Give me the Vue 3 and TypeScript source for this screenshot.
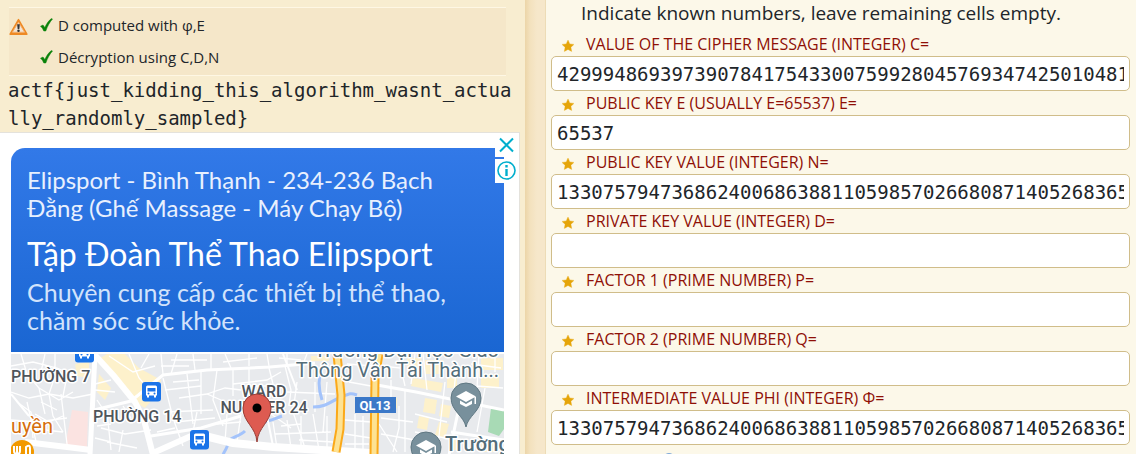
<script setup lang="ts">
import { ref } from 'vue'

interface Field {
  id: string
  label: string
  value: string
}

const bigN = '13307579473686240068638811059857026680871405268365174'

const fields = ref<Field[]>([
  { id: 'c', label: 'Value of the cipher message (Integer) C=', value: '42999486939739078417543300759928045769347425010481974' },
  { id: 'e', label: 'Public key E (usually E=65537) E=', value: '65537' },
  { id: 'n', label: 'Public key value (Integer) N=', value: bigN },
  { id: 'd', label: 'Private key value (Integer) D=', value: '' },
  { id: 'p', label: 'Factor 1 (prime number) P=', value: '' },
  { id: 'q', label: 'Factor 2 (prime number) Q=', value: '' },
  { id: 'phi', label: 'Intermediate value phi (Integer) Φ=', value: bigN },
])

const steps: string[] = ['D computed with φ,E', 'Décryption using C,D,N']

const busStops: [number, number][] = [[64, -11], [131, 28], [179, 76]]
const schools: [number, number][] = [[455, 44], [415, 93]]

const blocks: string[] = [
  'M86 6l10-6h18l14 14 22 12-4 14-12 14-10-6-18-20z',
  'M64 10l14-2v16l-12-2z',
  'M88 20l12 14-6 12-8-8z',
  'M396 4h14v16h-14zM414 6h18v14h-18zM402 24l30 5-2 9-30-6zM436 18h10v16h-10zM470 4h22v12h-22zM470 20h18v14h-18z',
  'M414 44l12 2-2 14-12-2zM408 62l10 2-2 12-10-2zM430 50l10 2-2 12-10-2zM428 68l10 2-4 14-10-3zM438 86h10v10h-10zM470 84l14 2v12h-14z',
  'M300 2h18v5h-18zM374 44h12v10h-12z',
]

const lanes: string[] = [
  'M0 12l22-4 24 6 18 8M10 0l6 20 12 14 6 26M34 0l-4 18M0 38l18 6 20-4 24 4 20-4M6 48l14 10 2 26M44 0v22l-6 18 4 22 10 16',
  'M16 48l10 44M50 40l6 50M0 66l26 2 30-4M28 34l20 12 14-8M56 22l-4 20M24 60l14 8 14-6M34 76l18 2M30 48l16 8',
  'M94 58l-8-12M84 36l20 2M84 30l16-4M90 74l24 6 26-4M96 88l30 6M96 58l4 38M112 76l-4 22M84 84l16 4M100 70l-14 2M112 52l8 12',
  'M98 2l24 16 22-6M118 0l10 24 12 14M138 0l-8 14M150 0l2 20M166 0l-6 20M182 0l2 16M200 0v16M214 0l6 14M238 0v12M256 0l2 12M276 0v10M296 0l-4 10',
  'M150 12h28M160 6h36M212 8l34-4M268 4l22 2M152 24l10 40 10 28M162 28l26-2M168 44l28-4 14 6M176 20l6 50M190 18v42M206 16l-4 30 10 26M222 16v26M238 14v18M258 14l4 16',
  'M154 36l36-4M154 58l48-2M164 68l40-4M164 74l-18 4M186 58l-4 20M196 40l18-6 16 2M222 30l34-4 14-8M206 70l24-2M230 60l-4 28M216 60l-2 28M240 32h22',
  'M274 12l6 24-2 16M286 28l-4 30 12 36M304 28v30M316 28l-4 50M276 38l48 2M262 68l4 26M276 66l4 28M290 62v34M302 60l6 36M264 80l56-2M270 72l20-2M288 86l34 2M316 62v34M260 60l20 14',
  'M336 10l26 2M338 28l22 4M336 40h8M334 66l26 2M334 80l26 4M344 60v36M352 62v34M334 90h24',
  'M370 12l20 2 4 18M380 26v24M388 52v22l-6 24M370 64l32 4M370 80l34 6M394 36v62M368 70l18 28M404 0l-4 30M412 0l4 36M434 28l-8 72M446 8l-4 38M468 0l-2 34M404 60l32 8M404 78l30 6M460 10l30 4M466 32l26 2M474 34l-8 44M484 0v18',
]
</script>

<template>
  <main class="page">
    <section class="results">
      <div class="notice">
        <svg class="warn" viewBox="0 0 20 18" role="img" aria-label="Warning">
          <path d="M10 1.200 18.800 16.600H1.200z" fill="#ee8a25" stroke="#ee8a25" stroke-width="1.600" stroke-linejoin="round" />
          <path d="M10 4 16.400 14.500H3.600z" fill="#f3e6d6" stroke="#f3b070" />
          <path d="M8.600 6.200h2.800l-.5 5H9.100z" fill="#333" />
          <circle cx="10" cy="13" r="1.300" fill="#333" />
        </svg>
        <ul class="steps">
          <li v-for="step in steps" :key="step">
            <svg class="check" viewBox="0 0 13 14" aria-hidden="true">
              <path d="M.5 8.200 3 7l1.800 2.600C6.600 5.600 8.600 2.600 11.400.6L12.500 1C9.500 4.400 7.500 8.200 5.800 13H3.800C3 11 2 9.400.5 8.200z" fill="#0a820a" stroke="#0a820a" stroke-width=".5" />
            </svg>
            <span>{{ step }}</span>
          </li>
        </ul>
      </div>
      <p class="plain">actf{just_kidding_this_algorithm_wasnt_actually_randomly_sampled}</p>

      <aside class="ad">
        <a class="card" href="#">
          <span class="place">Elipsport - Bình Thạnh - 234-236 Bạch Đằng (Ghế Massage - Máy Chạy Bộ)</span>
          <span class="name">Tập Đoàn Thể Thao Elipsport</span>
          <span class="desc">Chuyên cung cấp các thiết bị thể thao, chăm sóc sức khỏe.</span>
        </a>
        <svg class="map" viewBox="0 0 493 101" preserveAspectRatio="xMinYMin slice" role="img" aria-label="Map">
          <rect width="493" height="101" fill="#e8eaed" />
          <path v-for="b in blocks" :key="b" :d="b" fill="#fdf1cb" />
          <path d="M61 56l16 2-1 35H54z" fill="#fbe3e1" />
          <path d="M480 54l13 3v18l-5 7-11-4z" fill="#a8dab5" />
          <g fill="none" stroke="#fff" stroke-width="1.300">
            <path v-for="l in lanes" :key="l" :d="l" />
          </g>
          <g fill="none" stroke="#a3c3fb" stroke-width="3">
            <path d="M311 14c-4 10-4 20 0 32M302 53c14 0 18-6 28-10s10-4 16-2M249 68c10 0 16-4 22-6M212 101c2-6 6-8 4-12 2-6 12-6 18-12" />
          </g>
          <g fill="none" stroke="#fff">
            <path d="M84 0 79 101" stroke-width="5" />
            <path d="M83 0l20 22 21 26 9 18 9 35" stroke-width="6" />
            <path d="M0 40l18 22" stroke-width="2" />
            <path d="M14 88l42 5 24 3M142 99l38-17" stroke-width="6" />
            <path d="M186 80l36 9 40 4 97 6" stroke-width="8" />
            <path d="M83 56l37-9 32-26 44-5 63-3 45-4M140 82l50-8 40-12" stroke-width="3" />
            <path d="M366 31l39 7 88 18M452 34l-14 67M440 78l53 8" stroke-width="3" />
            <path d="M256 62l6 30M272 0l14 36" stroke-width="2" />
          </g>
          <g fill="none" stroke="#fba919" stroke-width="9">
            <path d="M326 0l4 41-1 34-4 23M368 0l-4 24-1 77" />
          </g>
          <g fill="none" stroke="#fde293" stroke-width="5">
            <path d="M326 0l4 41-1 34-4 23M368 0l-4 24-1 77" />
          </g>

          <g v-for="[x, y] in busStops" :key="x" :transform="`translate(${x} ${y})`">
            <rect width="19" height="19.500" rx="3" fill="#1a73e8" />
            <path d="M5.500 3.500h8a1.500 1.500 0 0 1 1.500 1.500v8.500h-1v2h-2v-2H7v2H5v-2H4V5a1.500 1.500 0 0 1 1.500-1.500z" fill="#fff" />
            <path d="M5.500 6h8v3.500h-8z" fill="#1a73e8" />
            <circle cx="6.500" cy="11.500" r="1" fill="#1a73e8" />
            <circle cx="12.500" cy="11.500" r="1" fill="#1a73e8" />
          </g>

          <g class="district">
            <text x="0" y="28">PHƯỜNG 7</text>
            <text x="82" y="68">PHƯỜNG 14</text>
            <text x="253" y="43" text-anchor="middle">WARD</text>
            <text x="253" y="59" text-anchor="middle">NUMBER 24</text>
          </g>
          <g class="school">
            <text x="488" y="3" text-anchor="end">Trường Đại Học Giao</text>
            <text x="488" y="23" text-anchor="end">Thông Vận Tải Thành...</text>
            <text class="strong" x="434" y="97">Trường</text>
          </g>
          <text class="food" x="0" y="79">uyền</text>
          <rect x="344" y="43" width="41" height="16" fill="#3b78c8" />
          <text class="road" x="364" y="56" text-anchor="middle">QL13</text>

          <g v-for="[x, y] in schools" :key="x" :transform="`translate(${x} ${y})`">
            <path d="M0 29C-2 18-15 13-15 0a15 15 0 0 1 30 0C15 13 2 18 0 29z" fill="#78909c" stroke="#5f7782" />
            <path d="M0-7 10-1.500 0 4-10-1.500zM-6 2.500 0 6l6-3.500V6L0 9l-6-3zM8.500-1h1.500v7H8.500z" fill="#fff" />
          </g>
          <g>
            <circle cx="11" cy="98" r="12" fill="#f29900" />
            <path d="M3 92v5q0 3 3 3t3-3v-5M6 92v9M15 101v-8q4-3 4 1v7" fill="none" stroke="#fff" stroke-width="2" />
          </g>
          <path d="M246 88c-1-15-14-20-14-34a14 14 0 0 1 28 0c0 14-13 19-14 34z" fill="#dd5b51" stroke="#983c35" />
          <circle cx="246" cy="54" r="4.500" fill="#000" />
        </svg>
        <div class="controls">
          <button type="button" aria-label="Close ad">
            <svg viewBox="0 0 24 24"><path d="M5 5.500l13 13M18 5.500l-13 13" fill="none" stroke="#00aecd" stroke-width="2" /></svg>
          </button>
          <button type="button" aria-label="Ad information">
            <svg viewBox="0 0 24 24">
              <circle cx="11.500" cy="11.500" r="8.500" fill="none" stroke="#00aecd" stroke-width="1.600" />
              <path d="M11.500 10v7M11.500 6v2.400" fill="none" stroke="#00aecd" stroke-width="2.400" />
            </svg>
          </button>
        </div>
      </aside>
    </section>

    <div class="gutter"></div>

    <form class="solver" @submit.prevent>
      <p class="hint">Indicate known numbers, leave remaining cells empty.</p>
      <div v-for="f in fields" :key="f.id" class="field">
        <label :for="f.id">
          <svg class="star" viewBox="0 0 14 14" aria-hidden="true">
            <path d="M7 1l1.800 3.900 4.200.5-3.100 2.900.8 4.200L7 10.400l-3.700 2.100.8-4.200L1 5.400l4.200-.5z" fill="#e5a50a" stroke="#f6dc9a" stroke-width="1" paint-order="stroke" stroke-linejoin="round" />
          </svg>
          <span>{{ f.label }}</span>
        </label>
        <input :id="f.id" v-model="f.value" type="text" spellcheck="false" autocomplete="off" />
      </div>
      <span class="dot"></span>
    </form>
  </main>
</template>

<style>
body {
  margin: 0;
  background: #f8edd0;
}
</style>

<style scoped>
.page {
  display: grid;
  grid-template-columns: 525fr 21fr 590fr;
  height: 100vh;
  overflow: hidden;
  background: #f8edd0;
  color: #212529;
  font-family: "Open Sans", "Noto Sans", sans-serif;
}
.results {
  min-width: 0;
  padding-top: 7px;
}
.notice {
  display: flex;
  gap: 12px;
  margin: 0 19px 0 9px;
  padding: 1px 0 2px;
  background: #f5e7c9;
  border-top: 1px solid #fef7e4;
  border-bottom: 1px solid #fef7e4;
}
.warn {
  width: 19px;
  height: 18px;
  margin-top: 9px;
}
.steps {
  margin: 0;
  padding: 0;
  list-style: none;
  font-size: 15px;
  line-height: 32px;
}
.steps li {
  display: flex;
  align-items: center;
  gap: 5px;
}
.check {
  width: 13px;
  height: 14px;
}
.plain {
  margin: 0;
  padding: 0 8px;
  font-family: "DejaVu Sans Mono", monospace;
  font-size: 19px;
  line-height: 28px;
  word-break: break-all;
}
.ad {
  position: relative;
  margin-right: 5px;
  padding: 15px 15px 0 11px;
  background: #fff;
  border: 1px solid #e4e2dc;
  border-left: 0;
}
.card {
  display: flex;
  flex-direction: column;
  padding: 18px 16px;
  border-radius: 14px 0 0 0;
  background: linear-gradient(#3279e8, #1a66d2);
  color: #fff;
  font-family: Lato, sans-serif;
  font-size: 24px;
  line-height: 28px;
  text-decoration: none;
}
.place {
  color: #e8f0fe;
}
.name {
  margin: 12px 0 4px;
  font-size: 32px;
  line-height: 40px;
}
.desc {
  color: #d2e3fc;
  font-size: 25px;
}
.map {
  display: block;
  width: 100%;
  margin-top: 2px;
  font-family: Roboto, sans-serif;
}
.map text {
  paint-order: stroke;
  stroke: #fff;
  stroke-width: 3px;
  stroke-linejoin: round;
}
.district {
  fill: #4f555b;
  font-size: 16px;
  font-weight: 500;
}
.school {
  fill: #546e7a;
  font-size: 20px;
}
.school .strong {
  font-weight: 500;
}
.map .food {
  fill: #d56e0c;
  font-size: 20px;
}
.map .road {
  fill: #fff;
  stroke: none;
  font-size: 13px;
  font-weight: 700;
}
.controls {
  position: absolute;
  top: 0;
  right: 0;
  display: flex;
  flex-direction: column;
  gap: 2px;
}
.controls button {
  display: block;
  width: 24px;
  height: 24px;
  padding: 0;
  border: 0;
  background: #fff;
}
.controls svg {
  display: block;
  width: 24px;
  height: 24px;
}
.gutter {
  background: linear-gradient(90deg, #ecd5a8, #f3e1bd 25%, #f6e7ca 60%, #f6e7ca);
  border-right: 1px solid #eddcb6;
}
.solver {
  min-width: 0;
  padding: 0 6px 0 5px;
  background: #fcf8e9;
}
.hint {
  margin: 0;
  padding: 0 30px 6px;
  font-size: 19px;
  line-height: 26px;
}
.field label {
  display: flex;
  align-items: center;
  gap: 11px;
  height: 24px;
  padding-left: 10px;
  color: #8f0f06;
  font-size: 16px;
  line-height: 24px;
  text-transform: uppercase;
}
.star {
  width: 14px;
  height: 14px;
  margin-top: 4px;
}
.field input {
  display: block;
  box-sizing: border-box;
  width: 100%;
  height: 35px;
  padding: 0 5px;
  border: 1px solid #d0bd8a;
  border-radius: 5px;
  background: #fff;
  color: #212529;
  font-family: "DejaVu Sans Mono", monospace;
  font-size: 19px;
}
.dot {
  display: block;
  width: 12px;
  height: 12px;
  margin: 8px 0 0 112px;
  border-radius: 50%;
  background: #7fa9d8;
}
</style>
